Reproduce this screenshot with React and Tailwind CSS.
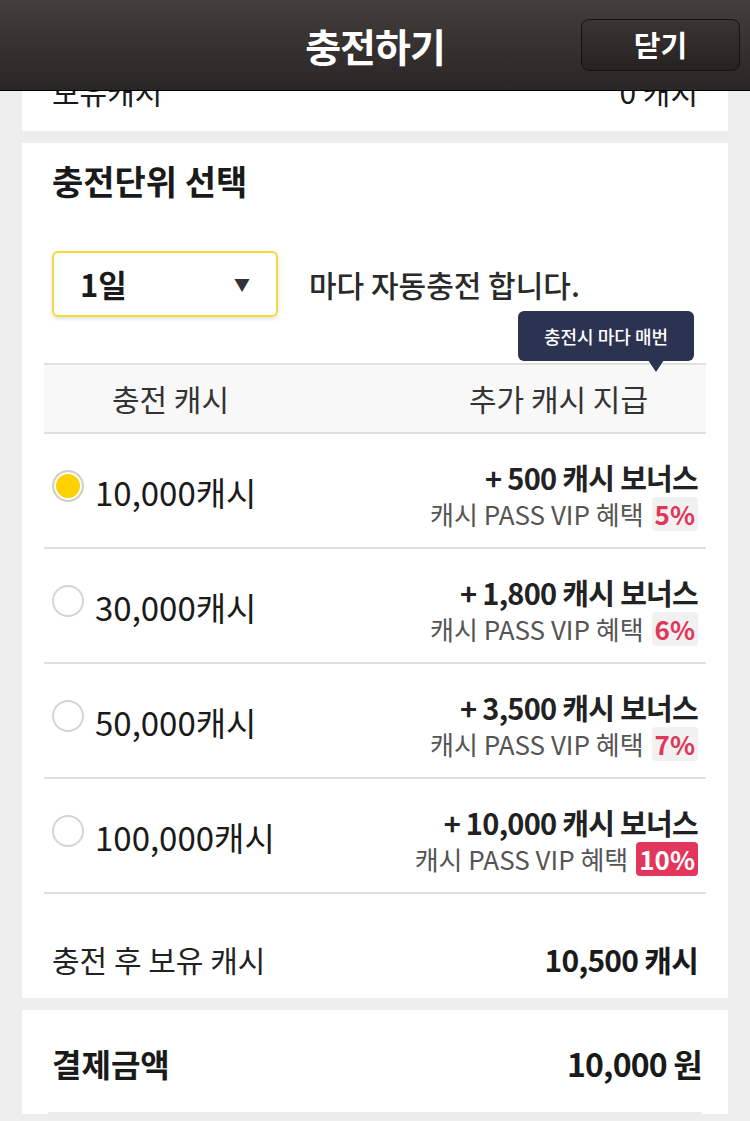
const FONT = { fontFamily: '"Noto Sans CJK KR", "Noto Sans", sans-serif' };

const rows = [
  { amount: "10,000캐시", bonus: "+ 500 캐시 보너스", rate: "5%", checked: true },
  { amount: "30,000캐시", bonus: "+ 1,800 캐시 보너스", rate: "6%" },
  { amount: "50,000캐시", bonus: "+ 3,500 캐시 보너스", rate: "7%" },
  { amount: "100,000캐시", bonus: "+ 10,000 캐시 보너스", rate: "10%", hot: true },
];

export default function App() {
  return (
    <div className="min-h-[1121px] bg-[#ededed] text-[#1a1a1a]" style={FONT}>
      {/* fixed top bar */}
      <div className="fixed top-0 left-0 z-20 flex h-[91px] w-full items-center justify-center border-b border-black bg-gradient-to-b from-[#443e3c] to-[#2a2625]">
        <h1 className="text-[39px] font-bold tracking-tight text-white">충전하기</h1>
        <button className="absolute right-[10px] top-[19px] flex h-[52px] w-[159px] items-center justify-center rounded-lg border border-[#151312] bg-gradient-to-b from-[#3a3533] to-[#262221] text-[29px] font-bold text-white">
          닫기
        </button>
      </div>

      {/* holding cash (scrolled under bar) */}
      <div className="mx-[22px] flex h-[131px] items-end justify-between bg-white px-[30px] pb-[22px] text-[30px] leading-[36px]">
        <span>보유캐시</span>
        <span>0 캐시</span>
      </div>

      {/* unit select */}
      <div className="mx-[22px] mt-[12px] bg-white px-[22px] pt-[18px]">
        <h2 className="pl-[8px] text-[34px] font-bold leading-[40px]">충전단위 선택</h2>

        <div className="mt-[50px] flex items-center pl-[8px]">
          <div className="flex h-[66px] w-[226px] items-center justify-between rounded-md border-2 border-[#f3da3a] px-[26px] shadow-[0_2px_4px_rgba(0,0,0,0.12)]">
            <span className="text-[31px] font-bold">1일</span>
            <span className="text-[16px] leading-none text-[#333]">▼</span>
          </div>
          <span className="ml-[31px] text-[30px] font-medium text-[#2a2a2a]">마다 자동충전 합니다.</span>
        </div>

        <div className="relative mt-[46px]">
          <div className="absolute right-[12px] top-[-52px] z-10 flex h-[50px] w-[176px] items-center justify-center rounded-md bg-[#2b3350] text-[18px] font-medium text-white">
            충전시 마다 매번
            <span className="absolute bottom-[-11px] right-[30px] h-0 w-0 border-x-[8px] border-t-[12px] border-x-transparent border-t-[#2b3350]" />
          </div>

          <div className="grid h-[71px] grid-cols-2 items-center border-y-2 border-[#e0e0e0] bg-[#f8f8f8] text-[30px] text-[#333]">
            <span className="pr-[78px] text-center">충전 캐시</span>
            <span className="pl-[36px] text-center">추가 캐시 지급</span>
          </div>

          {rows.map((r) => (
            <div key={r.amount} className="flex h-[115px] justify-between border-b-2 border-[#e0e0e0] pl-[8px] pr-[8px] pt-[24px]">
              <div className="flex items-start">
                <span
                  className={
                    "mt-[12px] h-[32px] w-[32px] rounded-full border-2 " +
                    (r.checked
                      ? "border-[#cfcfcf] bg-[#ffd000] shadow-[inset_0_0_0_2px_#fff]"
                      : "border-[#d4d4d4] bg-white")
                  }
                />
                <span className="ml-[11px] mt-[13px] text-[33px] leading-[42px]">{r.amount}</span>
              </div>
              <div className="flex flex-col items-end">
                <span className="text-[29px] font-semibold leading-[38px] tracking-tight text-[#222]">{r.bonus}</span>
                <div className="mt-[1px] flex items-center text-[26px] leading-[34px] text-[#555]">
                  <span>캐시 PASS VIP 혜택</span>
                  <span
                    className={
                      "ml-[8px] rounded-sm px-[3px] font-bold " +
                      (r.hot ? "bg-[#e3365d] text-white" : "bg-[#f1f1f1] text-[#e0365a]")
                    }
                  >
                    {r.rate}
                  </span>
                </div>
              </div>
            </div>
          ))}
        </div>

        <div className="flex items-center justify-between pb-[20px] pl-[8px] pr-[8px] pt-[46px]">
          <span className="text-[30px] leading-[38px] text-[#222]">충전 후 보유 캐시</span>
          <span className="text-[30px] font-bold leading-[38px] tracking-tight">10,500 캐시</span>
        </div>
      </div>

      {/* payment */}
      <div className="mx-[22px] mt-[12px] bg-white px-[26px]">
        <div className="flex items-center justify-between border-b-2 border-[#ececec] pb-[28px] pt-[32px]">
          <span className="pl-[4px] text-[32px] font-bold leading-[42px]">결제금액</span>
          <span className="text-[32px] font-bold leading-[42px] tracking-tight">10,000 원</span>
        </div>
      </div>
    </div>
  );
}
